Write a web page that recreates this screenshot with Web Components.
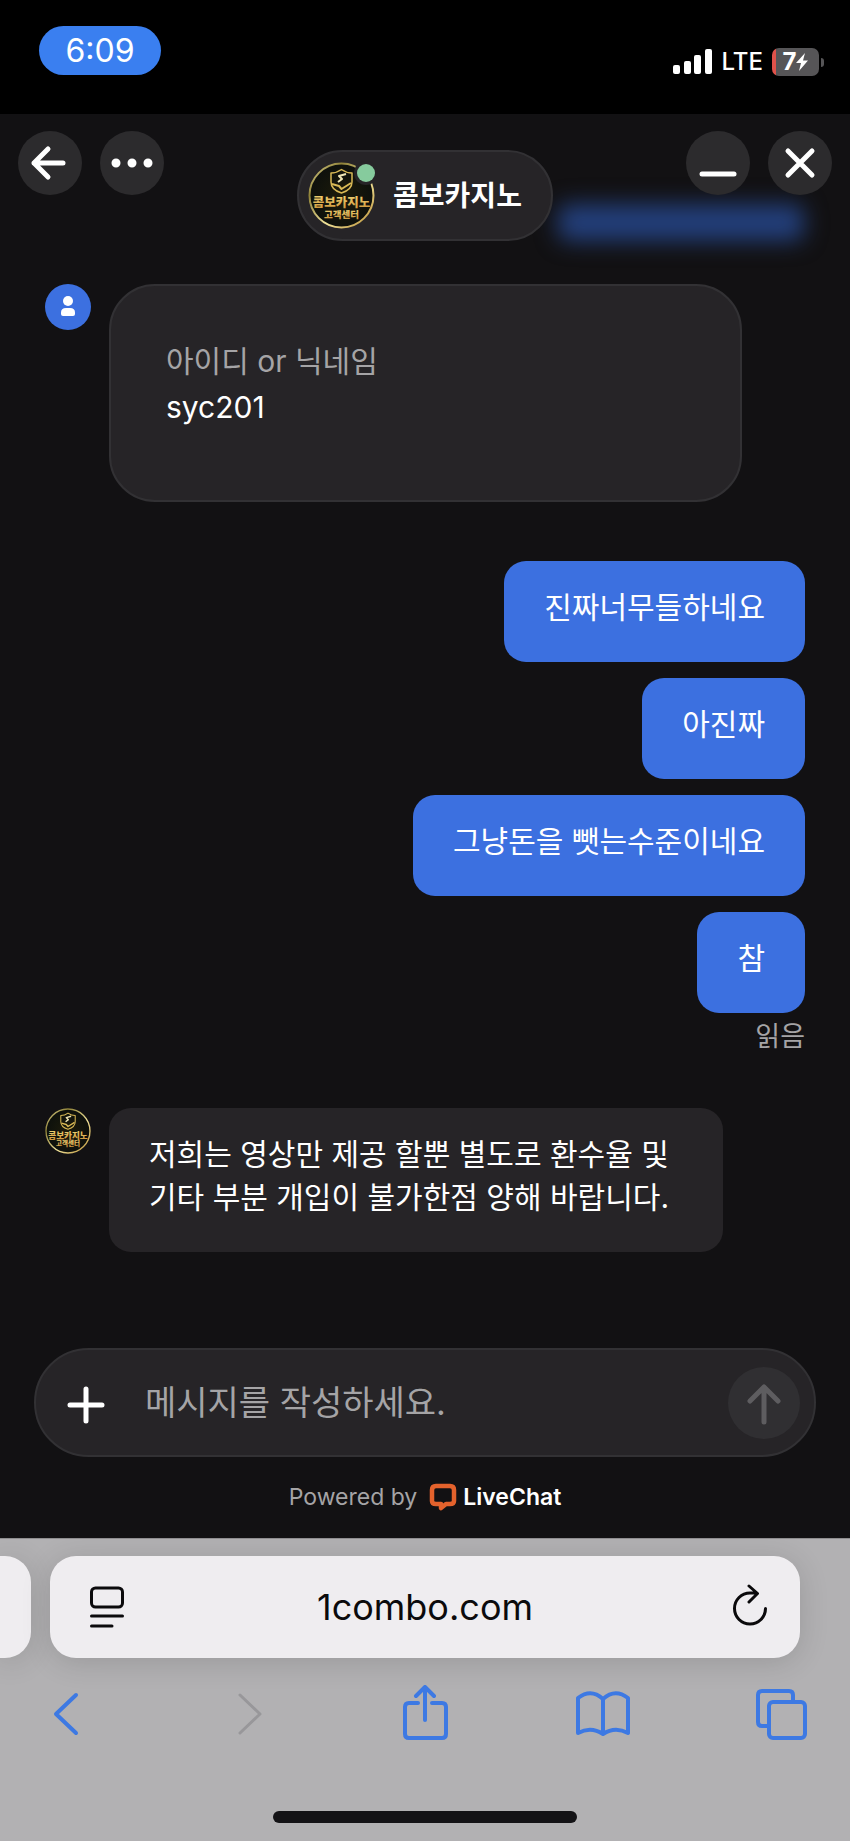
<!DOCTYPE html>
<html lang="ko">
<head>
<meta charset="utf-8">
<meta name="viewport" content="width=device-width, initial-scale=1">
<title>콤보카지노</title>
<style>
  body {
    margin: 0;
    background: #121113;
    font-family: Inter, "Noto Sans CJK KR", sans-serif;
  }
</style>
</head>
<body>
<phone-screen>
  <status-bar slot="status" time="6:09" network="LTE" battery="7"></status-bar>

  <chat-header slot="chat" name="콤보카지노"></chat-header>
  <chat-log slot="chat">
    <chat-row>
      <user-avatar slot="avatar"></user-avatar>
      <form-card>
        <span slot="label">아이디 or 닉네임</span>
        <span slot="value">syc201</span>
      </form-card>
    </chat-row>
    <chat-group status="읽음">
      <chat-bubble own>진짜너무들하네요</chat-bubble>
      <chat-bubble own>아진짜</chat-bubble>
      <chat-bubble own>그냥돈을 뺏는수준이네요</chat-bubble>
      <chat-bubble own>참</chat-bubble>
    </chat-group>
    <chat-row>
      <agent-avatar slot="avatar"></agent-avatar>
      <chat-bubble>저희는 영상만 제공 할뿐 별도로 환수율 및 기타 부분 개입이 불가한점 양해 바랍니다.</chat-bubble>
    </chat-row>
  </chat-log>
  <chat-composer slot="chat" placeholder="메시지를 작성하세요."></chat-composer>
  <powered-by slot="chat">Powered by</powered-by>

  <browser-bar slot="browser" url="1combo.com"></browser-bar>
</phone-screen>

<script>
const define = (name, template, setup) => {
  customElements.define(name, class extends HTMLElement {
    constructor() {
      super();
      this.attachShadow({ mode: "open" });
    }

    connectedCallback() {
      const attr = (key) => this.getAttribute(key) || "";
      this.shadowRoot.innerHTML = template(attr);
      if (setup) setup(this.shadowRoot, this);
    }
  });
};

// shared reset for buttons and links
const controls = `
  button, a {
    display: grid;
    place-items: center;
    padding: 0;
    border: 0;
    background: none;
    color: inherit;
    font: inherit;
    text-decoration: none;
    cursor: pointer;
  }
`;

define("phone-screen", () => `
  <style>
    :host {
      display: flex;
      flex-direction: column;
      min-height: 100vh;
      color: #fff;
    }
    main {
      flex: 1;
      display: flex;
      flex-direction: column;
    }
  </style>
  <slot name="status"></slot>
  <main><slot name="chat"></slot></main>
  <slot name="browser"></slot>
`);

define("status-bar", (attr) => `
  <style>
    :host {
      display: flex;
      justify-content: space-between;
      align-items: flex-start;
      box-sizing: border-box;
      height: 114px;
      padding: 26px 26px 0 39px;
      background: #000;
    }
    time {
      width: 122px;
      border-radius: 25px;
      background: #3a7ff0;
      font-size: 32px;
      line-height: 49px;
      text-align: center;
    }
    .right {
      display: flex;
      align-items: center;
      gap: 9px;
      margin-top: 22px;
      font-size: 24px;
      font-weight: 500;
      line-height: 28px;
    }
    .battery {
      display: flex;
      align-items: center;
      gap: 2px;
    }
    .level {
      display: flex;
      align-items: center;
      justify-content: center;
      box-sizing: border-box;
      width: 47px;
      height: 28px;
      border-radius: 7px;
      background: linear-gradient(90deg, #e0524a 4px, #565557 4px);
      font-weight: 700;
    }
    .nub {
      width: 3px;
      height: 9px;
      border-radius: 0 3px 3px 0;
      background: #565557;
    }
    svg { display: block; }
  </style>
  <time>${attr("time")}</time>
  <div class="right">
    <svg width="40" height="26" viewBox="0 0 40 26" fill="#fff" aria-hidden="true">
      <rect x="0" y="16" width="7" height="9" rx="2"/>
      <rect x="11" y="12" width="7" height="13" rx="2"/>
      <rect x="21" y="6" width="7" height="19" rx="2"/>
      <rect x="32" y="0" width="7" height="25" rx="2"/>
    </svg>
    <span>${attr("network")}</span>
    <span class="battery">
      <span class="level">${attr("battery")}
        <svg width="12" height="18" viewBox="0 0 12 18" fill="#fff" aria-hidden="true"><path d="M9 0 0 10H5L3 18 12 7.500H7z"/></svg>
      </span>
      <span class="nub"></span>
    </span>
  </div>
`);

define("chat-header", (attr) => `
  <style>
    ${controls}
    :host {
      position: relative;
      display: grid;
      grid-template-columns: 1fr auto 1fr;
      align-items: start;
      padding: 17px 18px 0;
    }
    /* message scrolled away under the frosted header */
    .glow {
      position: absolute;
      right: 46px;
      bottom: 0;
      width: 246px;
      height: 37px;
      border-radius: 10px;
      background: #233f7b;
      filter: blur(11px);
    }
    .group {
      position: relative;
      display: flex;
      gap: 18px;
    }
    .end { justify-content: flex-end; }
    button {
      width: 64px;
      height: 64px;
      border-radius: 50%;
      background: #2c2b2d;
    }
    .pill {
      position: relative;
      display: flex;
      align-items: center;
      gap: 18px;
      box-sizing: border-box;
      height: 91px;
      margin-top: 19px;
      padding: 0 29px 0 9px;
      border: 2px solid #323134;
      border-radius: 46px;
      background: #262427;
    }
    .face { position: relative; }
    agent-avatar { --size: 67px; }
    .online {
      position: absolute;
      top: 2px;
      right: 0;
      width: 18px;
      height: 18px;
      border-radius: 50%;
      background: #86cb9d;
      box-shadow: 0 0 0 3px #262427;
    }
    h1 {
      margin: 0;
      font-size: 28px;
      font-weight: 700;
      line-height: 40px;
    }
    svg {
      fill: none;
      stroke: #fff;
      stroke-width: 5;
      stroke-linecap: round;
      stroke-linejoin: round;
    }
  </style>
  <div class="glow"></div>
  <div class="group">
    <button type="button" aria-label="뒤로">
      <svg width="64" height="64" viewBox="0 0 64 64"><path d="M45 32H16M30 18 16 32 30 46"/></svg>
    </button>
    <button type="button" aria-label="메뉴">
      <svg width="64" height="64" viewBox="0 0 64 64"><path d="M16 32h.01M32 32h.01M48 32h.01" stroke-width="9"/></svg>
    </button>
  </div>
  <div class="pill">
    <div class="face">
      <agent-avatar></agent-avatar>
      <span class="online"></span>
    </div>
    <h1>${attr("name")}</h1>
  </div>
  <div class="group end">
    <button type="button" aria-label="최소화">
      <svg width="64" height="64" viewBox="0 0 64 64"><path d="M16 43H48"/></svg>
    </button>
    <button type="button" aria-label="닫기">
      <svg width="64" height="64" viewBox="0 0 64 64"><path d="M20 20 44 44M44 20 20 44"/></svg>
    </button>
  </div>
`);

define("agent-avatar", () => `
  <style>
    :host {
      display: block;
      flex: none;
      width: var(--size, 46px);
      height: var(--size, 46px);
    }
    svg {
      display: block;
      width: 100%;
      height: 100%;
    }
    text {
      font-family: "Noto Sans CJK KR", sans-serif;
      font-weight: 900;
      text-anchor: middle;
    }
  </style>
  <svg viewBox="0 0 67 67">
    <defs>
      <linearGradient id="gold" x1="0" y1="0" x2="0" y2="1">
        <stop offset="0" stop-color="#f6df7e"/>
        <stop offset="1" stop-color="#c98f35"/>
      </linearGradient>
      <linearGradient id="ring" x1="0" y1="0" x2="1" y2="1">
        <stop offset="0" stop-color="#e6dc9c"/>
        <stop offset="0.25" stop-color="#8f8238"/>
        <stop offset="0.6" stop-color="#f0e29a"/>
        <stop offset="1" stop-color="#b58a2e"/>
      </linearGradient>
      <radialGradient id="dark">
        <stop offset="0" stop-color="#1d1c0b"/>
        <stop offset="1" stop-color="#0d100c"/>
      </radialGradient>
    </defs>
    <circle cx="33.500" cy="33.500" r="32" fill="url(#dark)" stroke="url(#ring)" stroke-width="2"/>
    <g fill="none" stroke="#d9b955" stroke-width="1.500" stroke-linejoin="round">
      <path d="M33.500 7.500C30 10 27 11 23 11V20C23 26 27 29 33.500 31 40 29 44 26 44 20V11C40 11 37 10 33.500 7.500Z"/>
      <path d="M38 12 31 14 34 17 30 20" stroke="#f0e6b4" stroke-width="2"/>
      <path d="M24 22 31 24 33.500 27 43 21" stroke-width="2"/>
    </g>
    <text x="33.500" y="45" font-size="12.500" fill="url(#gold)">콤보카지노</text>
    <text x="33.500" y="56" font-size="9.500" fill="url(#gold)">고객센터</text>
  </svg>
`);

define("user-avatar", () => `
  <style>
    :host {
      display: block;
      flex: none;
      width: 46px;
      height: 46px;
      border-radius: 50%;
      background: #3c70e0;
    }
  </style>
  <svg width="46" height="46" viewBox="0 0 46 46" fill="#fff" aria-hidden="true">
    <circle cx="23" cy="17" r="5"/>
    <path d="M16 28.500Q16 24 21 24H25Q30 24 30 28.500V30Q30 32 28 32H18Q16 32 16 30Z"/>
  </svg>
`);

define("chat-log", () => `
  <style>
    :host {
      flex: 1;
      display: flex;
      flex-direction: column;
      gap: 59px;
      padding: 43px 45px 0;
    }
  </style>
  <slot></slot>
`);

define("chat-row", () => `
  <style>
    :host {
      display: flex;
      align-items: flex-start;
      gap: 18px;
    }
    .content {
      flex: 1;
      min-width: 0;
    }
  </style>
  <slot name="avatar"></slot>
  <div class="content"><slot></slot></div>
`);

define("form-card", () => `
  <style>
    :host {
      display: block;
      box-sizing: border-box;
      width: 91%;
      min-height: 218px;
      padding: 52px 55px;
      border: 2px solid #323134;
      border-radius: 46px;
      background: #262427;
    }
    dl, dd { margin: 0; }
    dl {
      font-size: 30px;
      line-height: 46px;
    }
    dt { color: #a5a4a6; }
  </style>
  <dl>
    <dt><slot name="label"></slot></dt>
    <dd><slot name="value"></slot></dd>
  </dl>
`);

define("chat-bubble", () => `
  <style>
    :host {
      display: block;
      box-sizing: border-box;
      max-width: 614px;
      padding: 25px 40px 33px;
      border-radius: 22px;
      background: #262427;
      font-size: 30px;
      line-height: 43px;
      word-break: keep-all;
    }
    :host([own]) { background: #3c70e0; }
  </style>
  <slot></slot>
`);

define("chat-group", (attr) => `
  <style>
    :host {
      display: flex;
      flex-direction: column;
      align-items: flex-end;
      gap: 16px;
    }
    small {
      margin-top: -4px;
      color: #a5a4a6;
      font-size: 27px;
      line-height: 24px;
    }
  </style>
  <slot></slot>
  <small>${attr("status")}</small>
`);

define("chat-composer", (attr) => `
  <style>
    ${controls}
    :host { display: block; }
    form {
      display: flex;
      align-items: center;
      box-sizing: border-box;
      height: 109px;
      margin: 0 34px;
      padding: 0 14px 0 20px;
      border: 2px solid #323134;
      border-radius: 55px;
      background: #262427;
    }
    input {
      flex: 1;
      min-width: 0;
      padding: 0;
      margin: 0 25px;
      border: 0;
      outline: 0;
      background: none;
      color: #fff;
      font: inherit;
      font-size: 34px;
      line-height: 50px;
    }
    input::placeholder {
      color: #a5a4a6;
      opacity: 1;
    }
    .send {
      width: 72px;
      height: 72px;
      border-radius: 50%;
      background: #302f32;
    }
    svg {
      fill: none;
      stroke: #fff;
      stroke-width: 5;
      stroke-linecap: round;
      stroke-linejoin: round;
    }
    .send svg { stroke: #5e5d60; }
  </style>
  <form>
    <button type="button" aria-label="첨부">
      <svg width="64" height="64" viewBox="0 0 64 64"><path d="M14 34H46M30 18V50"/></svg>
    </button>
    <input type="text" aria-label="메시지" placeholder="${attr("placeholder")}">
    <button class="send" type="submit" aria-label="보내기">
      <svg width="72" height="72" viewBox="0 0 72 72"><path d="M36 55V20M22 34 36 20 50 34"/></svg>
    </button>
  </form>
`, (root) => {
  root.querySelector("form").addEventListener("submit", (event) => event.preventDefault());
});

define("powered-by", () => `
  <style>
    ${controls}
    :host {
      display: flex;
      justify-content: center;
      align-items: center;
      gap: 12px;
      padding: 24px 0 25px;
      color: #a5a4a6;
      font-size: 23px;
      line-height: 32px;
    }
    a {
      display: flex;
      gap: 6px;
      color: #fff;
      font-weight: 600;
    }
  </style>
  <span><slot></slot></span>
  <a href="#livechat">
    <svg width="28" height="28" viewBox="0 0 28 28" fill="none" stroke="#e4622c" aria-hidden="true">
      <path d="M7 3H21Q25 3 25 7V18Q25 21 21 21H17L12 25V21H7Q3 21 3 18V7Q3 3 7 3Z" stroke-width="4.500" stroke-linejoin="round"/>
    </svg>
    <span>LiveChat</span>
  </a>
`);

define("browser-bar", (attr) => `
  <style>
    ${controls}
    :host {
      display: block;
      overflow: hidden;
      padding: 17px 0 18px;
      border-top: 1px solid #8f8e90;
      background: #b2b1b3;
    }
    .tabs {
      display: flex;
      gap: 19px;
      padding-right: 50px;
    }
    .previous, .address {
      height: 102px;
      background: #efedf0;
      box-shadow: 0 4px 30px rgba(0, 0, 0, 0.14);
    }
    .previous {
      width: 31px;
      border-radius: 0 26px 26px 0;
    }
    .address {
      flex: 1;
      display: flex;
      align-items: center;
      box-sizing: border-box;
      padding: 0 24px;
      border-radius: 26px;
      color: #0b0a0c;
    }
    input {
      flex: 1;
      min-width: 0;
      padding: 0;
      border: 0;
      outline: 0;
      background: none;
      color: inherit;
      font: inherit;
      font-size: 36px;
      line-height: 48px;
      text-align: center;
    }
    svg {
      display: block;
      fill: none;
      stroke: currentColor;
      stroke-width: 3;
      stroke-linecap: round;
      stroke-linejoin: round;
    }
    nav {
      display: flex;
      justify-content: space-between;
      padding: 27px 40px 70px;
      color: #3d79e3;
    }
    nav svg { stroke-width: 4; }
    nav button:disabled { color: #98979a; }
    nav button:disabled svg { stroke-width: 3; }
    .home {
      width: 304px;
      height: 12px;
      margin: 0 auto;
      border-radius: 6px;
      background: #141316;
    }
  </style>
  <div class="tabs">
    <div class="previous"></div>
    <div class="address">
      <button type="button" aria-label="페이지 메뉴">
        <svg width="56" height="48" viewBox="0 0 56 48"><rect x="17.500" y="5" width="31" height="19" rx="4"/><path d="M17.500 33H48.500M17.500 43H38"/></svg>
      </button>
      <input type="text" aria-label="주소" value="${attr("url")}">
      <button type="button" aria-label="새로고침">
        <svg width="56" height="48" viewBox="0 0 56 48"><path d="M45.500 25.500A15.500 15.500 0 1 1 30 10H37M29 3 37.500 10.500 29 19"/></svg>
      </button>
    </div>
  </div>
  <nav>
    <button type="button" aria-label="이전">
      <svg width="56" height="56" viewBox="0 0 56 56"><path d="M36 10 16 29 36 48"/></svg>
    </button>
    <button type="button" aria-label="다음" disabled>
      <svg width="56" height="56" viewBox="0 0 56 56"><path d="M21 10 41 29 21 48"/></svg>
    </button>
    <button type="button" aria-label="공유">
      <svg width="56" height="56" viewBox="0 0 56 56"><path d="M21 18H12Q8 18 8 22V49Q8 53 12 53H45Q49 53 49 49V22Q49 18 45 18H35M28 35V3M19 11 28 2 37 11"/></svg>
    </button>
    <button type="button" aria-label="책갈피">
      <svg width="56" height="56" viewBox="0 0 56 56"><path d="M27 14Q15 3 2 13V48Q15 41 27 49 39 41 52 48V13Q39 3 27 14V49"/></svg>
    </button>
    <button type="button" aria-label="탭">
      <svg width="56" height="56" viewBox="0 0 56 56"><path d="M15 41H8Q4 41 4 37V10Q4 6 8 6H35Q39 6 39 10V17"/><rect x="15" y="17" width="36" height="36" rx="4"/></svg>
    </button>
  </nav>
  <div class="home"></div>
`);
</script>
</body>
</html>
